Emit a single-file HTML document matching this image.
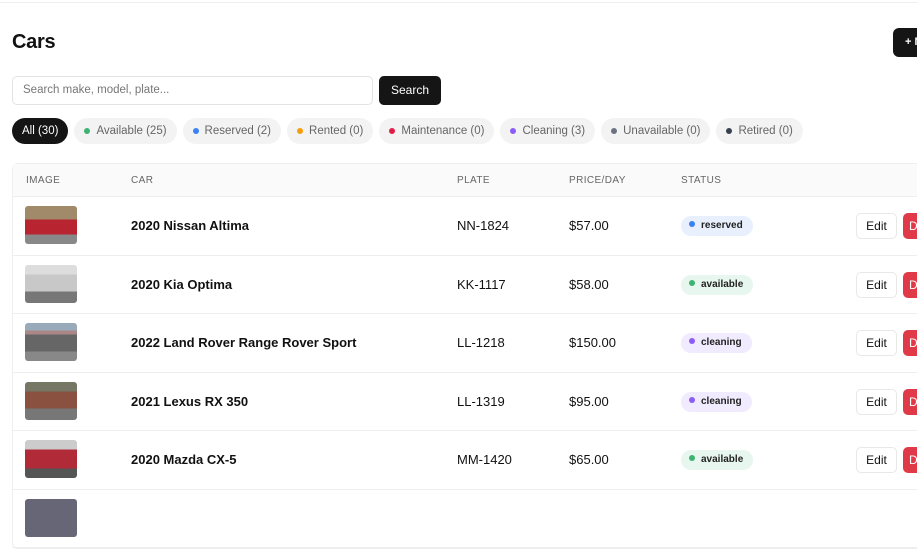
<!DOCTYPE html>
<html><head><meta charset="utf-8"><style>
*{box-sizing:border-box;margin:0;padding:0}
body{width:917px;height:500px;overflow:hidden;background:#fff;font-family:"Liberation Sans",sans-serif;color:#111;position:relative}
.topline{position:absolute;left:0;right:0;top:0;height:3px;border-bottom:1px solid #eee}
h1{position:absolute;left:12px;top:31px;font-size:20px;font-weight:bold;letter-spacing:-0.3px}
.new{position:absolute;left:893px;top:28px;width:60px;height:29px;background:#151515;border-radius:6px;color:#fff;font-size:11px;padding:8px 12px;font-weight:bold}
.search{position:absolute;left:12px;top:76px;width:361px;height:29px;border:1px solid #e3e3e3;border-radius:5px;font-size:11.5px;color:#777;padding:7px 10px}
.sbtn{position:absolute;left:379px;top:76px;width:62px;height:29px;background:#151515;border-radius:5px;color:#fff;font-size:12px;text-align:center;line-height:29px}
.chips{position:absolute;left:12px;top:118px;display:flex;gap:6px;white-space:nowrap}
.chip{height:26px;border-radius:13px;background:#f3f3f3;color:#666;font-size:11.5px;padding:0 10px;line-height:26px;display:flex;align-items:center}
.chip i{width:6px;height:6px;border-radius:50%;display:inline-block;margin-right:6px}
.chip.on{background:#151515;color:#fff}
.table{position:absolute;left:12px;top:163px;width:960px;border:1px solid #eee;border-radius:6px}
.th{height:33px;background:#fafafa;border-bottom:1px solid #eee;position:relative;font-size:10px;color:#666;letter-spacing:.4px}
.th span{position:absolute;top:11px}
.row{height:58.5px;border-bottom:1px solid #eee;position:relative;font-size:13px}
.row>*{position:absolute}
.img{left:12px;top:9px;width:52px;height:38px;border-radius:3px;overflow:hidden}
.name{left:118px;top:21px;font-weight:bold;font-size:13px}
.plate{left:444px;top:21px}
.price{left:556px;top:21px}
.badge{left:668px;top:19px;height:20px;border-radius:10px;font-size:10px;font-weight:bold;padding:0 10px 0 8px;line-height:20px;color:#222}
.badge i{display:inline-block;width:6px;height:6px;border-radius:50%;margin-right:6px;vertical-align:1px}
.edit{left:843px;top:16px;width:41px;height:26px;border:1px solid #e8e8e8;border-radius:5px;font-size:12px;text-align:center;line-height:24px}
.del{left:890px;top:16px;width:50px;height:26px;background:#e03a48;border-radius:5px;color:#fff;font-size:12px;line-height:26px;padding-left:6px}
</style></head><body>
<div class="topline"></div>
<h1>Cars</h1>
<div class="new">+ New</div>
<div class="search">Search make, model, plate...</div>
<div class="sbtn">Search</div>
<div class="chips">
<div class="chip on">All (30)</div>
<div class="chip"><i style="background:#3cb371"></i>Available (25)</div>
<div class="chip"><i style="background:#3b82f6"></i>Reserved (2)</div>
<div class="chip"><i style="background:#f59e0b"></i>Rented (0)</div>
<div class="chip"><i style="background:#e11d48"></i>Maintenance (0)</div>
<div class="chip"><i style="background:#8b5cf6"></i>Cleaning (3)</div>
<div class="chip"><i style="background:#6b7280"></i>Unavailable (0)</div>
<div class="chip"><i style="background:#374151"></i>Retired (0)</div>
</div>
<div class="table">
<div class="th"><span style="left:13px">IMAGE</span><span style="left:118px">CAR</span><span style="left:444px">PLATE</span><span style="left:556px">PRICE/DAY</span><span style="left:668px">STATUS</span></div>
<div class="row"><div class="img" style="background:linear-gradient(#a08a6a 0 35%,#b82430 35% 75%,#888 75%)"></div><div class="name">2020 Nissan Altima</div><div class="plate">NN-1824</div><div class="price">$57.00</div><div class="badge" style="background:#e8f0fe"><i style="background:#3b82f6"></i>reserved</div><div class="edit">Edit</div><div class="del">Delete</div></div>
<div class="row"><div class="img" style="background:linear-gradient(#ddd 0 25%,#c8c8c8 25% 70%,#777 70%)"></div><div class="name">2020 Kia Optima</div><div class="plate">KK-1117</div><div class="price">$58.00</div><div class="badge" style="background:#e7f6ee"><i style="background:#3cb371"></i>available</div><div class="edit">Edit</div><div class="del">Delete</div></div>
<div class="row"><div class="img" style="background:linear-gradient(#9ab 0 20%,#a88 20% 30%,#666 30% 75%,#888 75%)"></div><div class="name">2022 Land Rover Range Rover Sport</div><div class="plate">LL-1218</div><div class="price">$150.00</div><div class="badge" style="background:#f0ebfe"><i style="background:#8b5cf6"></i>cleaning</div><div class="edit">Edit</div><div class="del">Delete</div></div>
<div class="row"><div class="img" style="background:linear-gradient(#776 0 25%,#8a5040 25% 70%,#777 70%)"></div><div class="name">2021 Lexus RX 350</div><div class="plate">LL-1319</div><div class="price">$95.00</div><div class="badge" style="background:#f0ebfe"><i style="background:#8b5cf6"></i>cleaning</div><div class="edit">Edit</div><div class="del">Delete</div></div>
<div class="row"><div class="img" style="background:linear-gradient(#ccc 0 25%,#b02a38 25% 75%,#555 75%)"></div><div class="name">2020 Mazda CX-5</div><div class="plate">MM-1420</div><div class="price">$65.00</div><div class="badge" style="background:#e7f6ee"><i style="background:#3cb371"></i>available</div><div class="edit">Edit</div><div class="del">Delete</div></div>
<div class="row"><div class="img" style="background:#667"></div></div>
</div>
</body></html>
